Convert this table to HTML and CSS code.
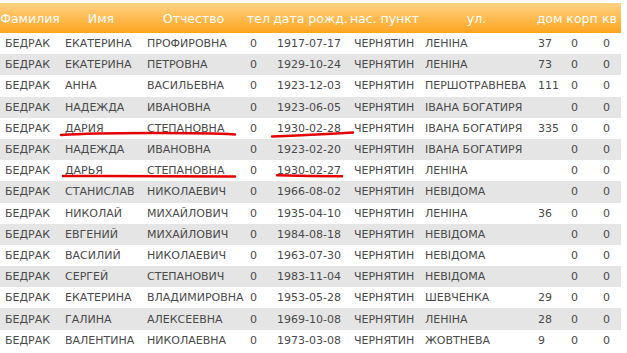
FILE: index.html
```html
<!DOCTYPE html>
<html lang="ru">
<head>
<meta charset="utf-8">
<title>Список</title>
<link rel="stylesheet" href="styles.css">
</head>
<body>
<div class="wrap">
<table class="grid">
<colgroup>
<col class="c1"><col class="c2"><col class="c3"><col class="c4"><col class="c5"><col class="c6"><col class="c7"><col class="c8"><col class="c9"><col class="c10">
</colgroup>
<thead>
<tr><th>Фамилия</th><th>Имя</th><th>Отчество</th><th>тел</th><th>дата рожд.</th><th>нас. пункт</th><th>ул.</th><th>дом</th><th>корп</th><th>кв</th></tr>
</thead>
<tbody>
<tr><td>БЕДРАК</td><td>ЕКАТЕРИНА</td><td>ПРОФИРОВНА</td><td>0</td><td>1917-07-17</td><td>ЧЕРНЯТИН</td><td>ЛЕНІНА</td><td>37</td><td>0</td><td>0</td></tr>
<tr><td>БЕДРАК</td><td>ЕКАТЕРИНА</td><td>ПЕТРОВНА</td><td>0</td><td>1929-10-24</td><td>ЧЕРНЯТИН</td><td>ЛЕНІНА</td><td>73</td><td>0</td><td>0</td></tr>
<tr><td>БЕДРАК</td><td>АННА</td><td>ВАСИЛЬЕВНА</td><td>0</td><td>1923-12-03</td><td>ЧЕРНЯТИН</td><td>ПЕРШОТРАВНЕВА</td><td>111</td><td>0</td><td>0</td></tr>
<tr><td>БЕДРАК</td><td>НАДЕЖДА</td><td>ИВАНОВНА</td><td>0</td><td>1923-06-05</td><td>ЧЕРНЯТИН</td><td>ІВАНА БОГАТИРЯ</td><td></td><td>0</td><td>0</td></tr>
<tr><td>БЕДРАК</td><td>ДАРИЯ</td><td>СТЕПАНОВНА</td><td>0</td><td>1930-02-28</td><td>ЧЕРНЯТИН</td><td>ІВАНА БОГАТИРЯ</td><td>335</td><td>0</td><td>0</td></tr>
<tr><td>БЕДРАК</td><td>НАДЕЖДА</td><td>ИВАНОВНА</td><td>0</td><td>1923-02-20</td><td>ЧЕРНЯТИН</td><td>ІВАНА БОГАТИРЯ</td><td></td><td>0</td><td>0</td></tr>
<tr><td>БЕДРАК</td><td>ДАРЬЯ</td><td>СТЕПАНОВНА</td><td>0</td><td>1930-02-27</td><td>ЧЕРНЯТИН</td><td>ЛЕНІНА</td><td></td><td>0</td><td>0</td></tr>
<tr><td>БЕДРАК</td><td>СТАНИСЛАВ</td><td>НИКОЛАЕВИЧ</td><td>0</td><td>1966-08-02</td><td>ЧЕРНЯТИН</td><td>НЕВІДОМА</td><td></td><td>0</td><td>0</td></tr>
<tr><td>БЕДРАК</td><td>НИКОЛАЙ</td><td>МИХАЙЛОВИЧ</td><td>0</td><td>1935-04-10</td><td>ЧЕРНЯТИН</td><td>ЛЕНІНА</td><td>36</td><td>0</td><td>0</td></tr>
<tr><td>БЕДРАК</td><td>ЕВГЕНИЙ</td><td>МИХАЙЛОВИЧ</td><td>0</td><td>1984-08-18</td><td>ЧЕРНЯТИН</td><td>НЕВІДОМА</td><td></td><td>0</td><td>0</td></tr>
<tr><td>БЕДРАК</td><td>ВАСИЛИЙ</td><td>НИКОЛАЕВИЧ</td><td>0</td><td>1963-07-30</td><td>ЧЕРНЯТИН</td><td>НЕВІДОМА</td><td></td><td>0</td><td>0</td></tr>
<tr><td>БЕДРАК</td><td>СЕРГЕЙ</td><td>СТЕПАНОВИЧ</td><td>0</td><td>1983-11-04</td><td>ЧЕРНЯТИН</td><td>НЕВІДОМА</td><td></td><td>0</td><td>0</td></tr>
<tr><td>БЕДРАК</td><td>ЕКАТЕРИНА</td><td>ВЛАДИМИРОВНА</td><td>0</td><td>1953-05-28</td><td>ЧЕРНЯТИН</td><td>ШЕВЧЕНКА</td><td>29</td><td>0</td><td>0</td></tr>
<tr><td>БЕДРАК</td><td>ГАЛИНА</td><td>АЛЕКСЕЕВНА</td><td>0</td><td>1969-10-08</td><td>ЧЕРНЯТИН</td><td>ЛЕНІНА</td><td>28</td><td>0</td><td>0</td></tr>
<tr><td>БЕДРАК</td><td>ВАЛЕНТИНА</td><td>НИКОЛАЕВНА</td><td>0</td><td>1973-03-08</td><td>ЧЕРНЯТИН</td><td>ЖОВТНЕВА</td><td>9</td><td>0</td><td>0</td></tr>
</tbody>
</table>
<svg class="marks" width="627" height="353" viewBox="0 0 627 353" aria-hidden="true">
<path d="M61 135 C100 132.5 200 132.5 235 134.5"/>
<path d="M272 136.5 Q310 135 353 132.5"/>
<path d="M63 176 Q150 175.8 235 176.5"/>
<path d="M277 175.3 Q310 176.2 342 176.3"/>
</svg>
</div>
</body>
</html>
```
FILE: styles.css
```css
html, body {
  margin: 0;
  padding: 0;
  background: #ffffff;
}
body {
  padding-top: 3px;
  font-family: "DejaVu Sans", Verdana, sans-serif;
}
.wrap {
  position: relative;
  width: 627px;
}
.grid {
  width: 621px;
  border-collapse: collapse;
  table-layout: fixed;
}
.c1 { width: 60px; }
.c2 { width: 82px; }
.c3 { width: 103px; }
.c4 { width: 27px; }
.c5 { width: 77px; }
.c6 { width: 71px; }
.c7 { width: 113px; }
.c8 { width: 33px; }
.c9 { width: 32px; }
.c10 { width: 23px; }
.grid th {
  height: 30px;
  padding: 0;
  font-size: 12.5px;
  font-weight: normal;
  color: #ffffff;
  text-align: center;
  white-space: nowrap;
  overflow: visible;
  background: linear-gradient(#ffd385, #fda41e);
}
.grid td {
  height: 21.2px;
  padding: 0 0 0 5px;
  font-size: 11px;
  color: #4a4a4a;
  white-space: nowrap;
  overflow: hidden;
}
.grid tbody tr:nth-child(even) td {
  background: #e5e5e5;
}
.marks {
  position: absolute;
  left: 0;
  top: -3px;
  pointer-events: none;
}
.marks path {
  fill: none;
  stroke: #e50000;
  stroke-width: 2.4;
  stroke-linecap: round;
}
```
